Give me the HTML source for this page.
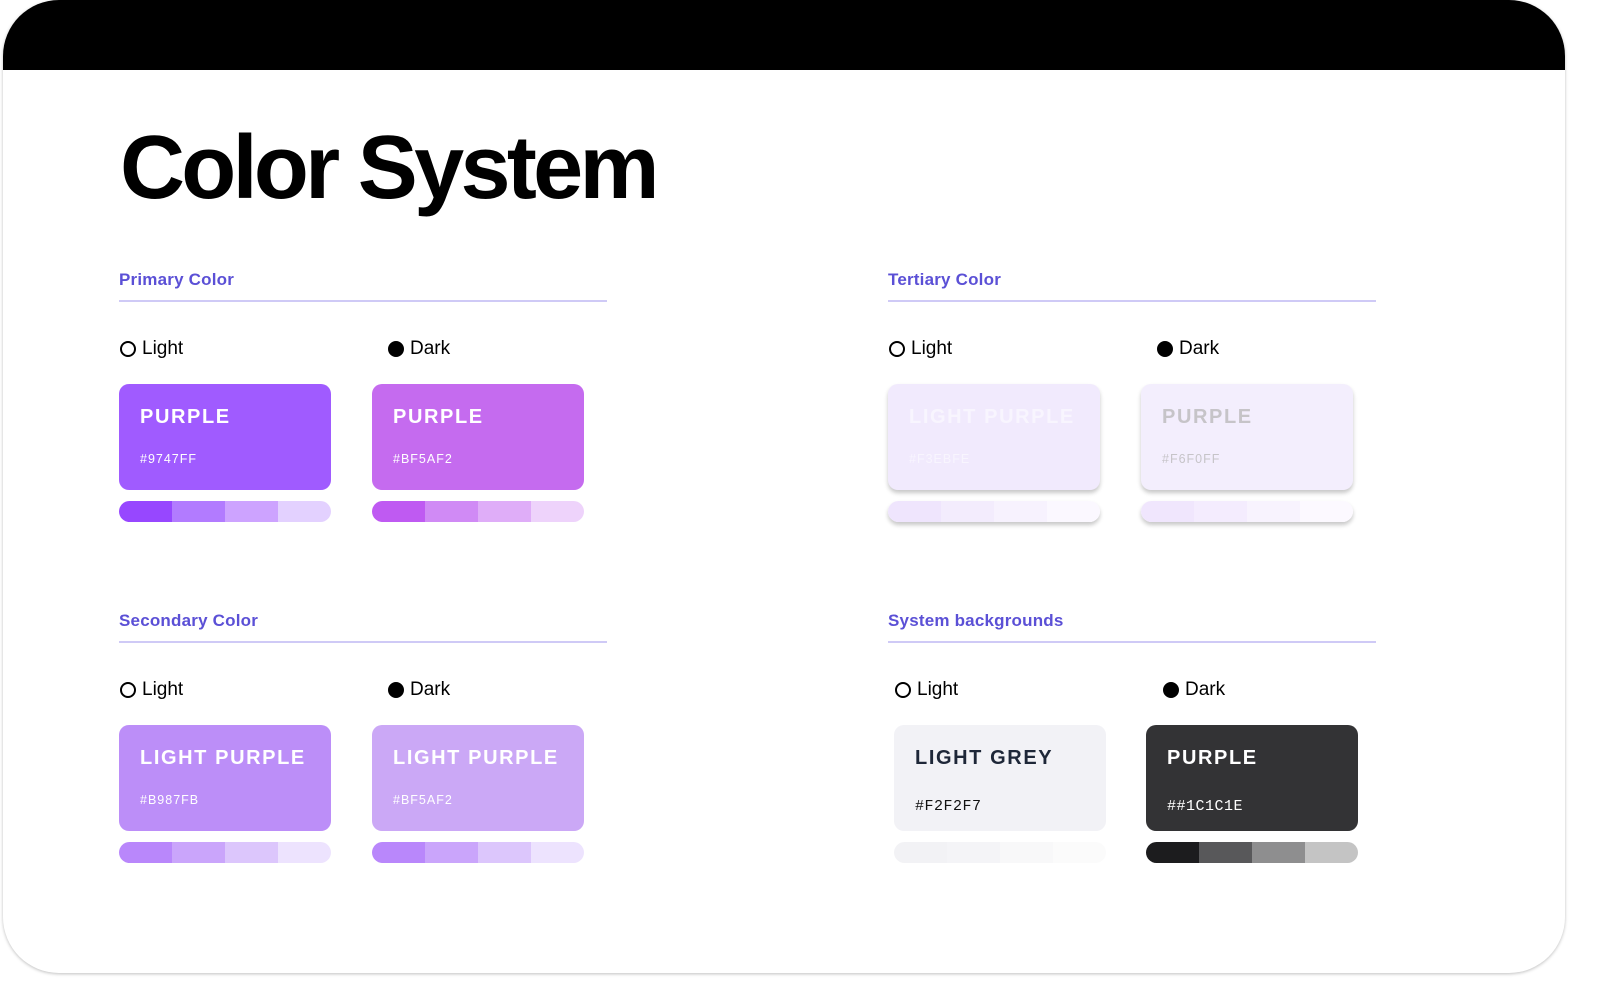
<!DOCTYPE html>
<html><head><meta charset="utf-8"><style>
*{margin:0;padding:0;box-sizing:border-box}
body{width:1601px;height:999px;background:#fff;position:relative;overflow:hidden;font-family:"Liberation Sans",sans-serif}
.frame{position:absolute;left:3px;top:0;width:1562px;height:973px;border-radius:56px;background:#fff;box-shadow:0 1px 3px rgba(0,0,0,.25);overflow:hidden}
.head{position:absolute;left:0;top:0;width:100%;height:70px;background:#000}
h1{position:absolute;left:117px;top:118px;font-size:90px;font-weight:700;letter-spacing:-3.7px;color:#000;line-height:100px}
.sec{position:absolute;width:488px}
.sec .t{font-size:17px;font-weight:700;color:#5b50d6;height:20px;line-height:20px;letter-spacing:.2px}
.sec .ln{position:absolute;left:0;top:30px;width:488px;height:2px;background:#cfcaf6}
.lbl{position:absolute;font-size:19px;color:#000;display:flex;align-items:center;gap:6px;top:68px}
.c{width:16px;height:16px;border-radius:50%;border:2px solid #000}
.c.f{background:#000}
.card{position:absolute;width:212px;height:106px;border-radius:10px;top:114px}
.card b{position:absolute;left:21px;top:22px;font-size:20px;letter-spacing:1.6px;color:#fff}
.card i{position:absolute;left:21px;top:68px;font-style:normal;font-size:12.5px;letter-spacing:1px;color:#fff;font-family:"Liberation Sans",sans-serif}
.bar{position:absolute;width:212px;height:21px;border-radius:11px;top:231px;overflow:hidden;display:flex}
.bar span{flex:1}
.sh{box-shadow:0 3px 4px rgba(0,0,0,.22)}
</style></head><body>
<div class="frame">
<div class="head"></div>
<h1>Color System</h1>

<div class="sec" style="left:116px;top:270px">
<div class="t">Primary Color</div><div class="ln"></div>
<div class="lbl" style="left:1px"><div class="c"></div>Light</div>
<div class="lbl" style="left:269px"><div class="c f"></div>Dark</div>
<div class="card" style="left:0;background:#a05bff"><b>PURPLE</b><i>#9747FF</i></div>
<div class="card" style="left:253px;background:#c56bef"><b>PURPLE</b><i>#BF5AF2</i></div>
<div class="bar" style="left:0"><span style="background:#9747ff"></span><span style="background:#b27bff"></span><span style="background:#cda3ff"></span><span style="background:#e3d1ff"></span></div>
<div class="bar" style="left:253px"><span style="background:#bf5af2"></span><span style="background:#d08af5"></span><span style="background:#dfadf8"></span><span style="background:#eed3fb"></span></div>
</div>

<div class="sec" style="left:885px;top:270px">
<div class="t">Tertiary Color</div><div class="ln"></div>
<div class="lbl" style="left:1px"><div class="c"></div>Light</div>
<div class="lbl" style="left:269px"><div class="c f"></div>Dark</div>
<div class="card sh" style="left:0;background:#f1eafd"><b style="color:#f8f5fe">LIGHT PURPLE</b><i style="color:#f8f5fe">#F3EBFE</i></div>
<div class="card sh" style="left:253px;background:#f3eefd"><b style="color:#c6c4c8">PURPLE</b><i style="color:#c6c4c8">#F6F0FF</i></div>
<div class="bar sh" style="left:0"><span style="background:#efe5fd"></span><span style="background:#f3ecfd"></span><span style="background:#f7f2fe"></span><span style="background:#fbf8ff"></span></div>
<div class="bar sh" style="left:253px"><span style="background:#f0e6fd"></span><span style="background:#f4ecfe"></span><span style="background:#f8f3fe"></span><span style="background:#fcf9ff"></span></div>
</div>

<div class="sec" style="left:116px;top:611px">
<div class="t">Secondary Color</div><div class="ln"></div>
<div class="lbl" style="left:1px"><div class="c"></div>Light</div>
<div class="lbl" style="left:269px"><div class="c f"></div>Dark</div>
<div class="card" style="left:0;background:#bc8ef8"><b>LIGHT PURPLE</b><i>#B987FB</i></div>
<div class="card" style="left:253px;background:#cba8f6"><b>LIGHT PURPLE</b><i>#BF5AF2</i></div>
<div class="bar" style="left:0"><span style="background:#b987fb"></span><span style="background:#caa5fb"></span><span style="background:#dcc6fc"></span><span style="background:#ede3fe"></span></div>
<div class="bar" style="left:253px"><span style="background:#b987fb"></span><span style="background:#caa5fb"></span><span style="background:#dcc6fc"></span><span style="background:#ede3fe"></span></div>
</div>

<div class="sec" style="left:885px;top:611px">
<div class="t">System backgrounds</div><div class="ln"></div>
<div class="lbl" style="left:7px"><div class="c"></div>Light</div>
<div class="lbl" style="left:275px"><div class="c f"></div>Dark</div>
<div class="card" style="left:6px;background:#f2f2f6"><b style="color:#1e2738">LIGHT GREY</b><i style="color:#111;font-family:'Liberation Mono',monospace;font-size:15px;top:73px;letter-spacing:.5px">#F2F2F7</i></div>
<div class="card" style="left:258px;background:#333335"><b>PURPLE</b><i style="font-family:'Liberation Mono',monospace;font-size:15px;top:73px;letter-spacing:.5px">##1C1C1E</i></div>
<div class="bar" style="left:6px"><span style="background:#f2f2f5"></span><span style="background:#f4f4f7"></span><span style="background:#f8f8f9"></span><span style="background:#fbfbfb"></span></div>
<div class="bar" style="left:258px"><span style="background:#1c1c1e"></span><span style="background:#58585a"></span><span style="background:#8e8e8f"></span><span style="background:#c4c4c4"></span></div>
</div>
</div>
</body></html>
